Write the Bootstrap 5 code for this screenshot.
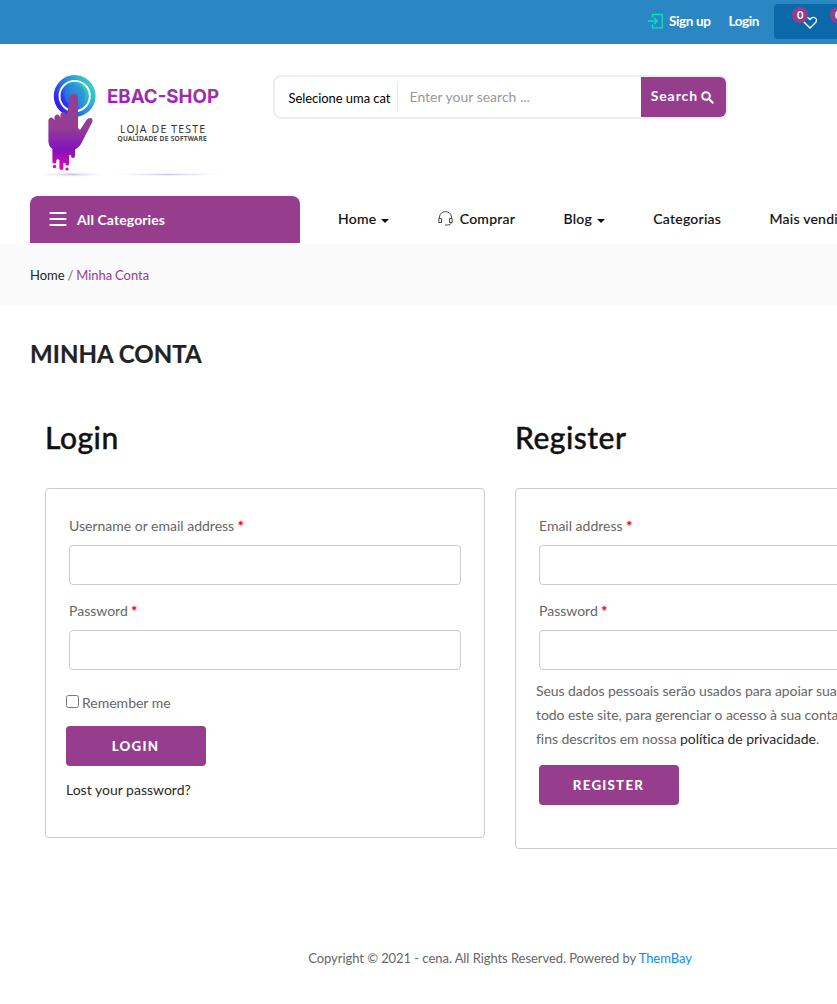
<!DOCTYPE html>
<html lang="pt-BR">
<head>
<meta charset="utf-8">
<meta name="viewport" content="width=device-width, initial-scale=1">
<title>Minha Conta</title>
<link href="https://cdn.jsdelivr.net/npm/bootstrap@5.3.0/dist/css/bootstrap.min.css" rel="stylesheet">
<style>
:root{--brand:#963d8e}
html{overflow:hidden}
body{font-family:Lato,"Open Sans",sans-serif;font-size:14px;line-height:24px;color:#666;background:#fff;overflow:hidden}
a{text-decoration:none;color:#222}
.page-clip{width:100%;overflow:hidden}
.page-shell{width:1000px;min-height:1004px}
.topbar{height:44px;background:#2a87c4}
.topbar-inner{padding:0 0 2px 648px;height:44px}
.topbar a{color:#fff;font-weight:700;font-size:13.5px;letter-spacing:-.38px}
.signup-link{margin-left:6px}
.login-link{margin-left:18px}
.wish{width:195px;height:35px;background:#0b69aa;border-radius:4px;margin-left:15px;padding:0 0 0 28px}
.wish-item{width:38px;height:35px;position:relative;flex:none}
.wish-item svg{margin-top:-3px}
.count{position:absolute;left:-10px;top:3px;width:16px;height:16px;border-radius:50%;background:var(--brand);color:#fff;font-size:11px;font-weight:700;line-height:16px;text-align:center}
.masthead{height:152px}
.logo-link{margin:21px 0 0 30px;width:210px;height:120px}
.searchbar{margin:31px 0 0 33px;width:455px;height:44px;border:2px solid #eee;border-radius:8px;overflow:hidden}
.search-cat{width:123px;height:30px;margin-top:5px;padding:4px 0 0 13.5px;border-right:1px solid #e8e8e8;color:#000;font-size:13px;letter-spacing:-.06px;white-space:nowrap}
.search-input{width:243px;padding:0 0 0 11.5px;border:0;color:#999;font-size:14px;background:none}
.search-input::placeholder{color:#999}
.search-btn{flex:1;background:var(--brand);color:#fff;border:0;font-weight:700;font-size:14px;letter-spacing:.9px;padding:0 2px 2px 0;white-space:nowrap}
.search-ico{margin-left:-1px}
.mainnav{height:48px}
.cat-toggle{width:270px;height:47px;margin-left:30px;padding-left:19px;background:var(--brand);border-radius:8px 8px 0 0;color:#fff;font-weight:700;font-size:14px;letter-spacing:.1px}
.cat-toggle svg{margin:0 10px 2px 0}
.menu-list{padding:0 0 2px 38px;gap:48.3px}
.menu-link{color:#111;font-weight:500;font-size:14px;letter-spacing:.24px;white-space:nowrap;-webkit-text-stroke:.12px #111}
.menu-link svg{margin:0 7px 2px 0}
.menu-link .caret{width:0;border:4px solid transparent;border-top-color:#111;border-bottom:0;margin:4px 0 0 5px}
.crumbs{height:62px;background:#fafafa;padding-left:30px;font-size:13px;letter-spacing:-.03px;word-spacing:-.4px}
.crumbs span{color:var(--brand)}
.content-area{padding:0 30px}
.page-title{font-size:24px;font-weight:700;color:#222;line-height:30px;margin:33px 0 48px;letter-spacing:.05px;-webkit-text-stroke:.2px #222}
.form-head{font-size:30px;font-weight:500;color:#111;line-height:40px;margin:0 0 31px;letter-spacing:.5px;-webkit-text-stroke:.4px #111}
.account-col{width:470px;padding:0 15px}
.form-box{border:1px solid #ccc;border-radius:4px;padding:25px 20px 0}
.form-box.login-box{height:350px}
.form-box.register-box{height:361px;padding-left:23px}
.field-row{padding:0 3px;margin-bottom:13px;height:72px}
.register-box .field-row{padding-left:0}
.field-row label{display:block;height:31px}
.field-row .form-control{height:40px;border:1px solid #ccc;border-radius:4px}
.req{color:#f00;-webkit-text-stroke:.3px #f00}
.btn-brand{display:block;width:140px;height:40px;border:0;border-radius:4px;background:var(--brand);color:#fff;font-weight:900;font-size:13.3px;letter-spacing:1.25px;padding:0 1px 0 0}
.privacy{margin:-5px 0 14px -3px;white-space:nowrap;letter-spacing:-.065px}
.remember{margin:20px 0 11px}
.remember input{width:13px;height:13px;margin:0 3px 3px 0}
.lost{margin-top:12px}
.lost,.privacy a{color:#2a2a2a}
.site-foot{margin-top:97px;font-size:13px;letter-spacing:-.06px;color:#666}
.site-foot a{color:#108bea}
</style>
</head>
<body>
<div class="page-clip">
<div class="page-shell">
  <header>
    <div class="topbar">
      <div class="topbar-inner d-flex align-items-center">
        <svg width="15" height="16" viewBox="0 0 15 16" fill="none" stroke="#0be0c0" stroke-width="1.3"><path d="M4.500 4.500V1.500h9.800v13.300H4.500v-3.300M0 8h9M6 4.800L9.300 8 6 11.200"/></svg>
        <a href="#" class="signup-link">Sign up</a>
        <a href="#" class="login-link">Login</a>
        <div class="wish d-flex">
          <div class="wish-item"><svg width="16" height="35" viewBox="0 0 16 35" fill="none" stroke="#fff" stroke-width="1.300"><path d="M8 27L2 21C0 17 5 14.500 8 18.500c3-4 8-1.500 6 2.500z"/></svg><span class="count">0</span></div>
          <div class="wish-item"><span class="count">0</span></div>
        </div>
      </div>
    </div>
    <div class="masthead d-flex">
      <a href="#" class="logo-link">
        <svg width="210" height="120" viewBox="0 0 210 120">
          <defs>
            <linearGradient id="ring" x1="0" y1=".8" x2="1" y2=".2"><stop stop-color="#3410f5"/><stop offset=".5" stop-color="#2789dc"/><stop offset="1" stop-color="#38d4bd"/></linearGradient>
            <linearGradient id="hand" x1="0" y1="0" x2="0" y2="1"><stop stop-color="#95408d"/><stop offset=".45" stop-color="#953c94"/><stop offset=".74" stop-color="#8212bf"/><stop offset="1" stop-color="#e808a4"/></linearGradient>
            <linearGradient id="word" x1="0" y1="0" x2="0" y2="1"><stop offset=".2" stop-color="#943f90"/><stop offset=".8" stop-color="#a318cf"/></linearGradient>
            <radialGradient id="shade"><stop stop-color="#c4c4e4"/><stop offset="1" stop-color="#fff" stop-opacity="0"/></radialGradient>
          </defs>
          <ellipse cx="42" cy="109.500" rx="38" ry="3" fill="url(#shade)"/>
          <ellipse cx="138" cy="109.500" rx="66" ry="1.800" fill="url(#shade)"/>
          <circle cx="44.700" cy="31" r="18.500" fill="none" stroke="url(#ring)" stroke-width="4.800"/>
          <circle cx="44.700" cy="31" r="14.200" fill="url(#ring)"/>
          <circle cx="44.700" cy="30" r="10.500" fill="#2d85db" opacity=".5"/>
          <path fill="url(#hand)" d="M40 33q0-4 4-4t4 4v30l2 2 6.500-10q2-2.500 4.500-2 2.500 1 1 4.500L52 77q-2 5-7 7.500V91q0 2-2 2t-2-2v-1q-1.500-1-2 1v8q0 1.500-1.800 1.500t-1.800-1.500v-1h-2v5q0 2-2 2t-2-2V95q-1.500-1.500-3 0v2q0 1.500-2 1.500t-2-1.500V84q-4-3-4-8V55q1-3 3-2.500 2.500.5 3 3V52q1-3 3-2.500t3 3v-3q1-3 3-2.500 2 0 3.500 3z"/>
          <circle cx="24.500" cy="101.500" r="1.700" fill="#de08a8"/>
          <circle cx="37" cy="104" r="1.600" fill="#e808a4"/>
          <text x="77" y="38" textLength="112" lengthAdjust="spacingAndGlyphs" font-family="Inter,Roboto,sans-serif" font-size="19" font-weight="700" fill="url(#word)">EBAC-SHOP</text>
          <text x="90" y="68" textLength="85" font-family="Noto Sans,sans-serif" font-size="10.500" fill="#333">LOJA DE TESTE</text>
          <text x="87.500" y="76" textLength="89" font-family="Noto Sans,sans-serif" font-size="6.500" font-weight="500" fill="#333" stroke="#333" stroke-width=".15">QUALIDADE DE SOFTWARE</text>
        </svg>
      </a>
      <form class="searchbar d-flex">
        <div class="search-cat">Selecione uma cat</div>
        <input class="search-input" type="text" placeholder="Enter your search ...">
        <button type="button" class="search-btn">Search <svg class="search-ico" width="13" height="13" viewBox="0 0 13 13" fill="none" stroke="#fff" stroke-width="2"><circle cx="5" cy="5" r="3.800"/><path d="M7.800 7.800l4.500 4.500"/></svg></button>
      </form>
    </div>
    <nav class="mainnav d-flex">
      <a href="#" class="cat-toggle d-flex align-items-center"><svg width="18" height="16" viewBox="0 0 18 16" stroke="#fff" stroke-width="2.200" stroke-linecap="round"><path d="M1.500 2h15M1.500 8h15M1.500 14h15"/></svg><span>All Categories</span></a>
      <div class="menu-list d-flex align-items-center flex-grow-1">
        <a href="#" class="menu-link d-flex align-items-center">Home<i class="caret"></i></a>
        <a href="#" class="menu-link d-flex align-items-center"><svg width="15" height="15" viewBox="0 0 15 15" fill="none" stroke="#333" stroke-width=".900"><path d="M1.500 7V6C2-1.200 13-1.200 13.500 6v1M3.500 7.500H.8v4h2.700zM11.500 7.500h2.700v4h-2.700zM13 11.500c0 2-1.500 2.500-3.500 2.500M7 14h2.500"/></svg>Comprar</a>
        <a href="#" class="menu-link d-flex align-items-center">Blog<i class="caret"></i></a>
        <a href="#" class="menu-link d-flex align-items-center">Categorias</a>
        <a href="#" class="menu-link d-flex align-items-center">Mais vendidos</a>
      </div>
    </nav>
  </header>
  <div class="crumbs d-flex align-items-center"><div><a href="#">Home</a> / <span>Minha Conta</span></div></div>
  <main class="content-area">
    <h1 class="page-title">MINHA CONTA</h1>
    <div class="d-flex align-items-start">
      <section class="account-col">
        <h2 class="form-head">Login</h2>
        <form class="form-box login-box">
          <div class="field-row"><label for="user">Username or email address <span class="req">*</span></label><input id="user" class="form-control" type="text"></div>
          <div class="field-row"><label for="pass">Password <span class="req">*</span></label><input id="pass" class="form-control" type="password"></div>
          <label class="remember d-flex align-items-center"><input type="checkbox"><span>Remember me</span></label>
          <button type="button" class="btn-brand">LOGIN</button>
          <a href="#" class="d-block lost">Lost your password?</a>
        </form>
      </section>
      <section class="account-col">
        <h2 class="form-head">Register</h2>
        <form class="form-box register-box">
          <div class="field-row"><label for="mail">Email address <span class="req">*</span></label><input id="mail" class="form-control" type="email"></div>
          <div class="field-row"><label for="newpass">Password <span class="req">*</span></label><input id="newpass" class="form-control" type="password"></div>
          <p class="privacy">Seus dados pessoais serão usados para apoiar sua<br>todo este site, para gerenciar o acesso à sua conta<br>fins descritos em nossa <a href="#">política de privacidade</a>.</p>
          <button type="button" class="btn-brand">REGISTER</button>
        </form>
      </section>
    </div>
  </main>
  <footer class="site-foot text-center">Copyright © 2021 - cena. All Rights Reserved. Powered by <a href="#">ThemBay</a></footer>
</div>
</div>
<script src="https://cdn.jsdelivr.net/npm/bootstrap@5.3.0/dist/js/bootstrap.bundle.min.js"></script>
</body>
</html>
